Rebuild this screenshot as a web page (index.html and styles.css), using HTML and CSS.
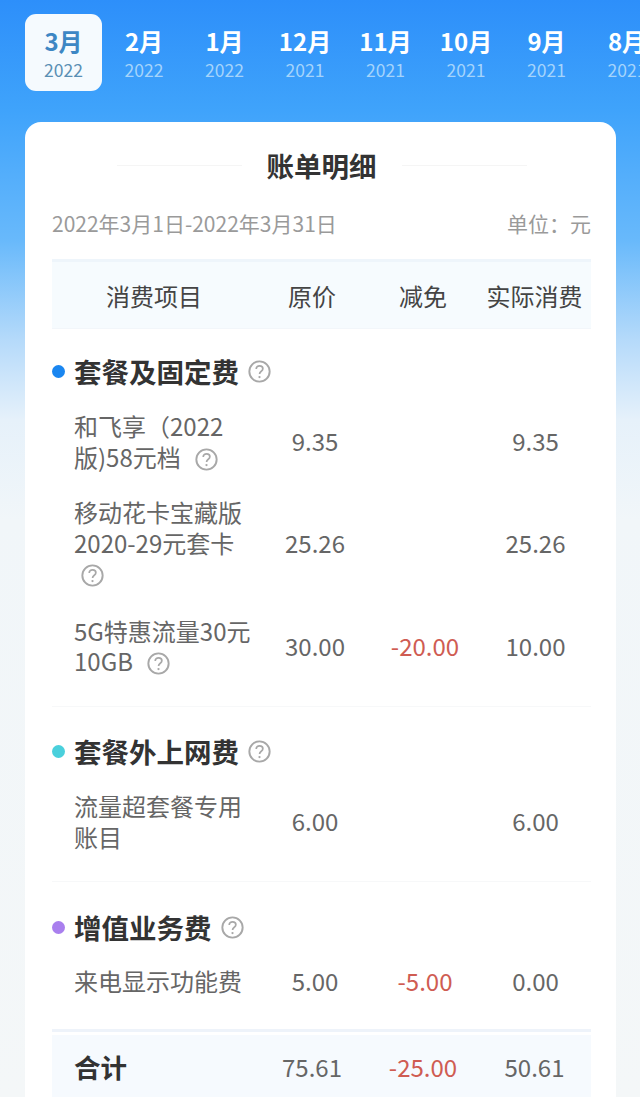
FILE: index.html
```html
<!DOCTYPE html>
<html>
<head>
  <title>账单明细</title>
  <link rel="stylesheet" href="styles.css">
</head>
<body>
  <svg class="defs" width="0" height="0">
    <symbol id="help" viewBox="0 0 24 24">
      <circle cx="12" cy="12" r="10.6" fill="none" stroke="#a8a8a8" stroke-width="2"/>
      <path d="M8.6 9.4c0-2 1.5-3.3 3.5-3.3s3.4 1.2 3.4 3c0 1.5-.9 2.2-1.9 2.9-1 .7-1.5 1.2-1.5 2.5" fill="none" stroke="#a8a8a8" stroke-width="1.8"/>
      <circle cx="12" cy="17.8" r="1.2" fill="#a8a8a8"/>
    </symbol>
  </svg>

  <div class="tabs">
    <div class="tab active"><b>3月</b><span>2022</span></div>
    <div class="tab"><b>2月</b><span>2022</span></div>
    <div class="tab"><b>1月</b><span>2022</span></div>
    <div class="tab"><b>12月</b><span>2021</span></div>
    <div class="tab"><b>11月</b><span>2021</span></div>
    <div class="tab"><b>10月</b><span>2021</span></div>
    <div class="tab"><b>9月</b><span>2021</span></div>
    <div class="tab"><b>8月</b><span>2021</span></div>
  </div>

  <div class="card">
    <h2 class="card-title">账单明细</h2>
    <div class="period">
      <span>2022年3月1日-2022年3月31日</span>
      <span>单位：元</span>
    </div>

    <div class="table-head">
      <div>消费项目</div>
      <div>原价</div>
      <div>减免</div>
      <div>实际消费</div>
    </div>

    <section class="group group-first">
      <h3 class="group-title"><i class="dot dot-blue"></i>套餐及固定费<svg class="help help-lg"><use href="#help"/></svg></h3>
      <div class="row row-a">
        <div class="name">和飞享（2022<br>版)58元档<svg class="help"><use href="#help"/></svg></div>
        <div>9.35</div><div></div><div>9.35</div>
      </div>
      <div class="row row-b">
        <div class="name">移动花卡宝藏版<br>2020-29元套卡<br><svg class="help help-alone"><use href="#help"/></svg></div>
        <div>25.26</div><div></div><div>25.26</div>
      </div>
      <div class="row row-c">
        <div class="name">5G特惠流量30元<br>10GB<svg class="help"><use href="#help"/></svg></div>
        <div>30.00</div><div class="minus">-20.00</div><div>10.00</div>
      </div>
    </section>

    <section class="group group-second">
      <h3 class="group-title"><i class="dot dot-cyan"></i>套餐外上网费<svg class="help help-lg"><use href="#help"/></svg></h3>
      <div class="row row-d">
        <div class="name">流量超套餐专用<br>账目</div>
        <div>6.00</div><div></div><div>6.00</div>
      </div>
    </section>

    <section class="group group-third">
      <h3 class="group-title"><i class="dot dot-purple"></i>增值业务费<svg class="help help-lg"><use href="#help"/></svg></h3>
      <div class="row row-e">
        <div class="name">来电显示功能费</div>
        <div>5.00</div><div class="minus">-5.00</div><div>0.00</div>
      </div>
    </section>

    <div class="total">
      <div class="total-label">合计</div>
      <div>75.61</div>
      <div class="minus">-25.00</div>
      <div>50.61</div>
    </div>
  </div>
</body>
</html>
```

FILE: styles.css
```css
html, body {
  height: 1097px;
  overflow: hidden;
}
body {
  margin: 0;
  font-family: "Noto Sans CJK SC", "Noto Sans", sans-serif;
  color: #666;
  background: linear-gradient(180deg, #2d8ffa 0, #3fa3fb 110px, #68b9fb 240px, #b5dafa 340px, #e6f1fa 420px, #f1f6f9 520px, #f4f7f8 1097px);
}
.defs { display: block; height: 0; }

/* month strip */
.tabs {
  display: flex;
  padding: 14px 0 0 25px;
  height: 77px;
  white-space: nowrap;
}
.tab {
  flex: none;
  width: 77px;
  margin-right: 3.5px;
  height: 77px;
  box-sizing: border-box;
  padding-top: 9px;
  text-align: center;
  color: #fff;
}
.tab b {
  display: block;
  font-size: 24px;
  line-height: 35px;
  font-weight: 700;
}
.tab span {
  display: block;
  font-size: 17.5px;
  line-height: 23px;
  color: #a5d4fb;
}
.tab.active {
  background: #f5fafe;
  border-radius: 11px;
}
.tab.active b { color: #3d87c4; }
.tab.active span { color: #5a8fb4; }

/* card */
.card {
  margin: 31px 24px 0 25px;
  height: 975px;
  padding: 0 25px 0 27px;
  background: #fff;
  border-radius: 16px 16px 0 0;
}
.card-title {
  display: flex;
  align-items: center;
  justify-content: center;
  gap: 25px;
  margin: 0;
  padding-top: 22px;
  height: 42px;
  font-size: 27.5px;
  line-height: 40px;
  font-weight: 700;
  color: #333;
}
.card-title::before,
.card-title::after {
  content: "";
  width: 125px;
  height: 1px;
  background: #f5f5f5;
}
.period {
  display: flex;
  justify-content: space-between;
  margin-top: 23px;
  font-size: 21px;
  line-height: 28px;
  color: #9a9a9a;
}
.table-head {
  display: grid;
  grid-template-columns: 204px 112px 110px 113px;
  align-items: center;
  height: 70px;
  margin-top: 22px;
  font-size: 24px;
  text-align: center;
  color: #444;
  background: #f6fbfe;
  border-top: 3px solid #eef5fb;
  border-bottom: 1px solid #f2f6fa;
  box-sizing: border-box;
}

/* fee groups */
.group-title {
  display: flex;
  align-items: center;
  margin: 0;
  height: 40px;
  font-size: 27.5px;
  line-height: 40px;
  font-weight: 700;
  color: #333;
}
.group-first { padding-top: 22px; height: 378px; border-bottom: 1px solid #f7f8f9; box-sizing: border-box; }
.group-second { padding-top: 24px; height: 175px; border-bottom: 1px solid #f7f8f9; box-sizing: border-box; }
.group-third { padding-top: 25px; height: 150px; border-bottom: 3px solid #eef3fa; box-sizing: border-box; }
.dot {
  flex: none;
  width: 13px;
  height: 13px;
  margin-right: 9px;
  border-radius: 50%;
}
.dot-blue { background: #1a86f0; }
.dot-cyan { background: #4ad0dc; }
.dot-purple { background: #a97fee; }

.help {
  width: 23px;
  height: 23px;
  margin-left: 14px;
  vertical-align: -4px;
}
.help-lg { margin-left: 9px; }
.help-alone { margin-left: 7px; }

.row {
  display: grid;
  grid-template-columns: 208px 110px 110px 111px;
  align-items: center;
  font-size: 24px;
  line-height: 30.5px;
  text-align: center;
  color: #666;
}
.row .name {
  padding-left: 22px;
  text-align: left;
  white-space: nowrap;
}
.row-a { margin-top: 20px; }
.row-b { margin-top: 25px; }
.row-c { margin-top: 27px; }
.row-d { margin-top: 20px; }
.row-e { margin-top: 19px; }
.minus { color: #cf5c52; }

.total {
  display: grid;
  grid-template-columns: 204px 112px 110px 113px;
  align-items: center;
  box-sizing: border-box;
  height: 62px;
  margin-top: 3px;
  padding-top: 1px;
  font-size: 24px;
  text-align: center;
  color: #666;
  background: #f6fafe;
}
.total-label {
  padding-left: 22px;
  text-align: left;
  font-size: 26.5px;
  font-weight: 700;
  color: #333;
}
```
